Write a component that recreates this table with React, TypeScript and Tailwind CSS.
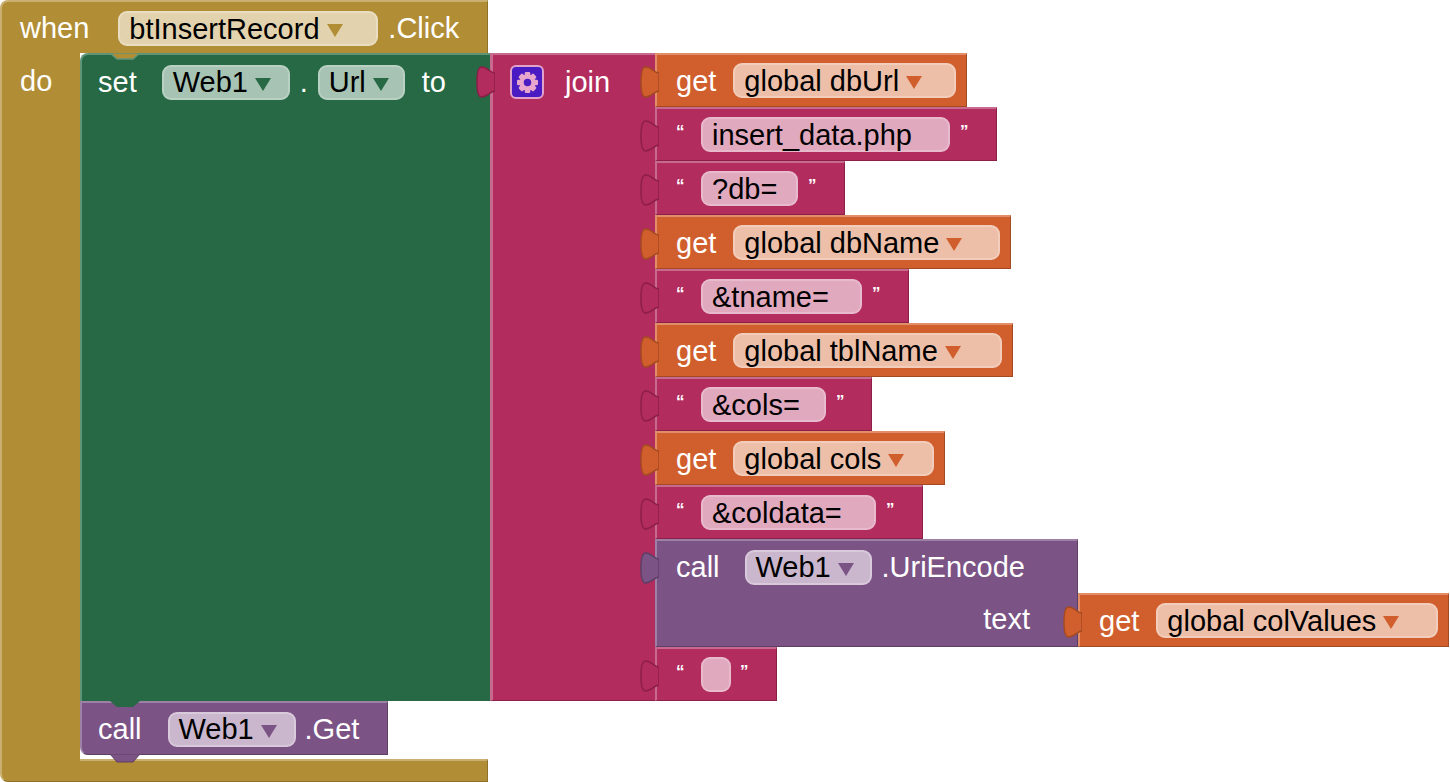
import React from 'react';

const Arrow: React.FC<{ color: string }> = ({ color }) => (
  <svg width="16" height="13" viewBox="0 0 16 13" className="ml-[7px] mt-[3px] shrink-0">
    <path d="M0 0 H16 L8 13 Z" fill={color} />
  </svg>
);

const Tab: React.FC<{ fill: string; stroke: string }> = ({ fill, stroke }) => (
  <svg width="19" height="32" viewBox="0 0 19 32" className="absolute left-[-17px] top-[11px]">
    <path
      d="M19,7 C14,7 12,1 5.5,1 C1.5,1 1,10 1,16 C1,22 1.5,31 5.5,31 C12,31 14,25 19,25 Z"
      fill={fill}
      stroke={stroke}
      strokeWidth="1.5"
    />
  </svg>
);

const Gear: React.FC = () => (
  <div className="flex h-[34px] w-[34px] shrink-0 items-center justify-center rounded-[6px] border-2 border-[#E0A2CB] bg-[#4A1AC2]">
    <svg width="25" height="25" viewBox="0 0 20 20">
      <g fill="#E8A6CD">
        <circle cx="10" cy="10" r="6.4" />
        {[0, 45, 90, 135].map((a) => (
          <rect key={a} x="7.8" y="1.6" width="4.4" height="16.8" rx="1" transform={`rotate(${a} 10 10)`} />
        ))}
      </g>
      <circle cx="10" cy="10" r="3" fill="#4A1AC2" />
    </svg>
  </div>
);

interface PillProps {
  className: string;
  arrow?: string;
  children?: React.ReactNode;
}

const Pill: React.FC<PillProps> = ({ className, arrow, children }) => (
  <div className={`flex h-[35px] shrink-0 items-center rounded-[9px] border-2 pl-[9px] pt-[1px] text-black ${className}`}>
    {children && <span>{children}</span>}
    {arrow && <Arrow color={arrow} />}
  </div>
);

const GetBlock: React.FC<{ name: string; w: string; pillW: string }> = ({ name, w, pillW }) => (
  <div
    className={`relative flex h-[54px] shrink-0 items-center border-t-2 border-l-2 border-r border-b border-t-[#E28E69] border-l-[#E28E69] border-r-[#A44A22] border-b-[#A44A22] bg-[#D05F2D] pl-[19px] text-white ${w}`}
  >
    <Tab fill="#D05F2D" stroke="#A44A22" />
    <span className="pt-[1px]">get</span>
    <Pill className={`ml-[17px] border-[#F2CDBB] bg-[#EDBFA8] ${pillW}`} arrow="#D05F2D">
      {name}
    </Pill>
  </div>
);

const TextBlock: React.FC<{ value: string; w: string; pillW: string; closeGap: string }> = ({
  value,
  w,
  pillW,
  closeGap,
}) => (
  <div
    className={`relative flex h-[54px] shrink-0 items-center border-t-2 border-l-2 border-r border-b border-t-[#C8698F] border-l-[#C8698F] border-r-[#8C1F48] border-b-[#8C1F48] bg-[#B32C5E] pl-[19px] text-white ${w}`}
  >
    <Tab fill="#B32C5E" stroke="#8C1F48" />
    <span className="mb-[6px] w-[10px] text-[17px] font-bold">“</span>
    <Pill className={`ml-[15px] border-[#E8BBCC] bg-[#E0A9BE] ${pillW}`}>{value}</Pill>
    <span className={`mb-[6px] text-[17px] font-bold ${closeGap}`}>”</span>
  </div>
);

export default function App() {
  return (
    <div className="h-[782px] w-[1450px] overflow-hidden bg-white font-['Liberation_Sans',Arial,sans-serif] text-[29px] leading-none">
      <div className="flex w-[488px] flex-col">
        {/* when ... .Click */}
        <div className="flex h-[53px] w-[488px] shrink-0 items-center rounded-tl-[8px] border-t-2 border-l-2 border-r border-t-[#C9AF70] border-l-[#C9AF70] border-r-[#8E722A] bg-[#B18E35] pl-[18px] pt-[2px] text-white">
          <span>when</span>
          <Pill className="ml-[29px] w-[260px] border-[#E9DDC2] bg-[#E2D3AE]" arrow="#B18E35">
            btInsertRecord
          </Pill>
          <span className="ml-[10px]">.Click</span>
        </div>

        <div className="flex">
          {/* do arm */}
          <div className="w-[80px] shrink-0 border-l-2 border-[#C9AF70] bg-[#B18E35] pl-[18px] text-white">
            <div className="flex h-[55px] items-center pt-[1px]">do</div>
          </div>

          <div className="flex w-max shrink-0 flex-col">
            {/* set Web1.Url to join */}
            <div className="flex items-stretch">
              <div className="relative w-[410px] shrink-0 rounded-tl-[8px] border-t-2 border-l-2 border-[#5E9579] bg-[#266944] pl-[16px] text-white">
                <svg width="30" height="8" viewBox="0 0 30 8" className="absolute left-[28px] top-[-2px]">
                  <path d="M0 0 L7 6 H23 L30 0 Z" fill="#B18E35" stroke="#5E9579" strokeWidth="1.5" />
                </svg>
                <div className="flex h-[53px] items-center pt-[1px]">
                  <span>set</span>
                  <Pill className="ml-[25px] w-[128px] border-[#B9D1C3] bg-[#A7C3B3]" arrow="#266944">
                    Web1
                  </Pill>
                  <span className="ml-[10px]">.</span>
                  <Pill className="ml-[10px] w-[87px] border-[#B9D1C3] bg-[#A7C3B3]" arrow="#266944">
                    Url
                  </Pill>
                  <span className="ml-[17px]">to</span>
                </div>
              </div>

              <div className="relative w-[165px] shrink-0 border-t-2 border-l-[3px] border-b border-t-[#C8698F] border-l-[#C8698F] border-b-[#8C1F48] bg-[#B32C5E] pl-[17px] text-white">
                <Tab fill="#B32C5E" stroke="#8C1F48" />
                <div className="flex h-[53px] items-center pt-[1px]">
                  <Gear />
                  <span className="ml-[21px]">join</span>
                </div>
              </div>

              <div className="flex flex-col">
                <GetBlock name="global dbUrl" w="w-[312px]" pillW="w-[223px]" />
                <TextBlock value="insert_data.php" w="w-[342px]" pillW="w-[249px]" closeGap="ml-[10px]" />
                <TextBlock value="?db=" w="w-[190px]" pillW="w-[97px]" closeGap="ml-[10px]" />
                <GetBlock name="global dbName" w="w-[356px]" pillW="w-[267px]" />
                <TextBlock value="&tname=" w="w-[254px]" pillW="w-[161px]" closeGap="ml-[10px]" />
                <GetBlock name="global tblName" w="w-[358px]" pillW="w-[269px]" />
                <TextBlock value="&cols=" w="w-[217px]" pillW="w-[125px]" closeGap="ml-[10px]" />
                <GetBlock name="global cols" w="w-[290px]" pillW="w-[201px]" />
                <TextBlock value="&coldata=" w="w-[268px]" pillW="w-[175px]" closeGap="ml-[10px]" />

                {/* call Web1.UriEncode text: get global colValues */}
                <div className="flex items-end">
                  <div className="relative flex h-[108px] w-[423px] shrink-0 flex-col border-t-2 border-l-2 border-r border-b border-t-[#9D80A6] border-l-[#9D80A6] border-r-[#5E3F66] border-b-[#5E3F66] bg-[#7B5385] text-white">
                    <Tab fill="#7B5385" stroke="#5E3F66" />
                    <div className="flex h-[52px] items-center pl-[19px] pt-[1px]">
                      <span>call</span>
                      <Pill className="ml-[25px] w-[127px] border-[#D8C9DB] bg-[#CAB7CE]" arrow="#7B5385">
                        Web1
                      </Pill>
                      <span className="ml-[10px]">.UriEncode</span>
                    </div>
                    <div className="flex h-[54px] items-center justify-end pr-[47px] pt-[1px]">text</div>
                  </div>
                  <GetBlock name="global colValues" w="w-[371px]" pillW="w-[282px]" />
                </div>

                <TextBlock value="" w="w-[122px]" pillW="w-[30px]" closeGap="ml-[9px]" />
              </div>
            </div>

            {/* call Web1.Get */}
            <div className="relative flex h-[54px] w-[308px] shrink-0 items-center rounded-bl-[8px] border-t-2 border-l-2 border-r border-b border-t-[#9D80A6] border-l-[#9D80A6] border-r-[#5E3F66] border-b-[#5E3F66] bg-[#7B5385] pl-[16px] pt-[1px] text-white">
              <svg width="30" height="8" viewBox="0 0 30 8" className="absolute left-[28px] top-[-2px]">
                <path d="M0 0 L7 6 H23 L30 0 Z" fill="#266944" />
              </svg>
              <svg width="30" height="9" viewBox="0 0 30 9" className="absolute bottom-[-9px] left-[28px]">
                <path d="M0 0 L7 8 H23 L30 0 Z" fill="#7B5385" stroke="#5E3F66" strokeWidth="1" />
              </svg>
              <span>call</span>
              <Pill className="ml-[26px] w-[128px] border-[#D8C9DB] bg-[#CAB7CE]" arrow="#7B5385">
                Web1
              </Pill>
              <span className="ml-[9px]">.Get</span>
            </div>
            <div className="h-[4px]" />
          </div>
        </div>

        {/* bottom bar */}
        <div className="flex h-[23px] w-[488px] shrink-0">
          <div className="w-[80px] rounded-bl-[8px] border-l-2 border-b border-l-[#C9AF70] border-b-[#8E722A] bg-[#B18E35]" />
          <div className="flex-1 border-t-2 border-r border-b border-t-[#C9AF70] border-r-[#8E722A] border-b-[#8E722A] bg-[#B18E35]" />
        </div>
      </div>
    </div>
  );
}
